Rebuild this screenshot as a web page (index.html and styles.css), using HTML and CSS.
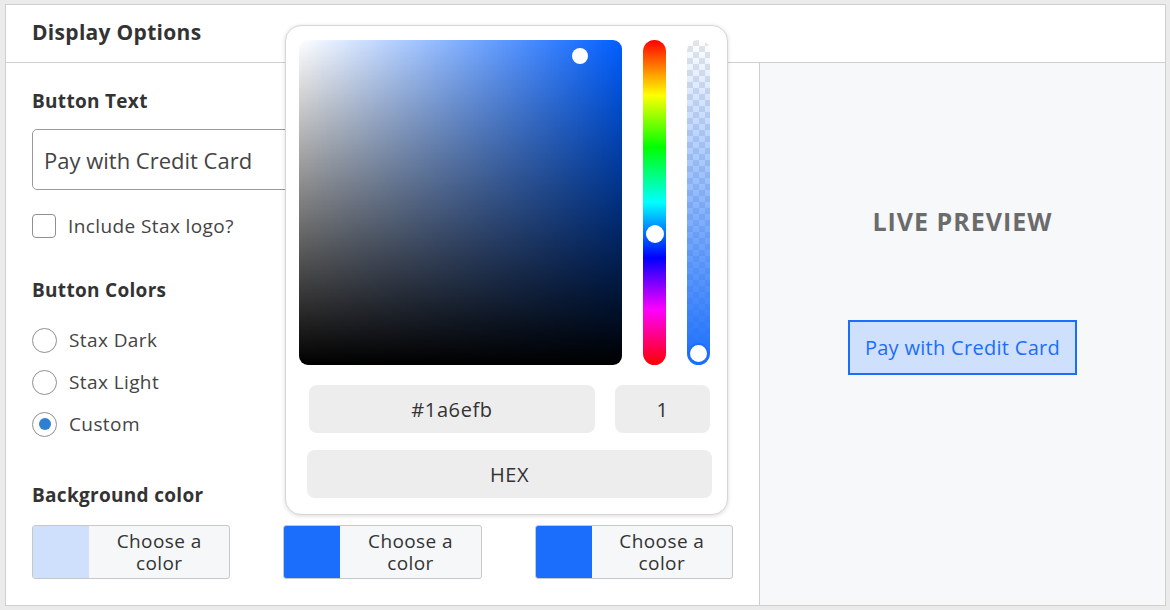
FILE: index.html
```html
<!DOCTYPE html>
<html lang="en">
<head>
	<meta charset="utf-8">
	<title>Display Options</title>
	<link rel="stylesheet" href="styles.css">
</head>
<body>
	<div class="card">
		<div class="card-head">Display Options</div>
		<div class="card-body">
			<div class="options">
				<div class="label">Button Text</div>
				<input type="text" class="text-input" value="Pay with Credit Card">
				<label class="check"><span class="box"></span>Include Stax logo?</label>

				<div class="label label-colors">Button Colors</div>
				<label class="radio"><span class="dot"></span>Stax Dark</label>
				<label class="radio"><span class="dot"></span>Stax Light</label>
				<label class="radio"><span class="dot on"></span>Custom</label>

				<div class="label label-bg">Background color</div>
				<div class="swatches">
					<div class="swatch"><span class="chip chip-light"></span><span class="chip-text">Choose a color</span></div>
					<div class="swatch"><span class="chip"></span><span class="chip-text">Choose a color</span></div>
					<div class="swatch"><span class="chip"></span><span class="chip-text">Choose a color</span></div>
				</div>
			</div>
			<div class="preview">
				<div class="preview-title">LIVE PREVIEW</div>
				<div class="pay-btn">Pay with Credit Card</div>
			</div>
		</div>

		<!-- color picker popover -->
		<div class="picker">
			<div class="picker-top">
				<div class="sat"><span class="sat-handle"></span></div>
				<div class="hue"><span class="hue-handle"></span></div>
				<div class="alpha"><span class="alpha-handle"></span></div>
			</div>
			<div class="picker-fields">
				<div class="field field-hex">#1a6efb</div>
				<div class="field field-alpha">1</div>
			</div>
			<div class="field field-mode">HEX</div>
		</div>
	</div>
</body>
</html>
```

FILE: styles.css
```css
body {
	margin: 0;
	padding: 4px 4px 4px 5px;
	background: #ebebeb;
	font-family: 'Open Sans', 'Noto Sans', sans-serif;
	color: #333;
}
.card {
	position: relative;
	height: 600px;
	background: #fff;
	border: 1px solid #cfcfcf;
	display: flex;
	flex-direction: column;
}
.card-head {
	height: 54px;
	padding: 0 26px 3px;
	display: flex;
	align-items: center;
	font-size: 21px;
	font-weight: 700;
	letter-spacing: 0.3px;
	border-bottom: 1px solid #cfcfcf;
}
.card-body {
	flex: 1;
	display: grid;
	grid-template-columns: 754px 1fr;
}

/* left side */
.options {
	padding: 25px 26px 0;
	border-right: 1px solid #cfcfcf;
}
.label {
	font-size: 19px;
	font-weight: 700;
	line-height: 26px;
	letter-spacing: 0.3px;
}
.text-input {
	display: block;
	box-sizing: border-box;
	width: 440px;
	height: 61px;
	margin-top: 15px;
	padding: 0 11px;
	border: 1px solid #9a9a9a;
	border-radius: 5px;
	font-family: inherit;
	font-size: 22px;
	color: #444;
}
.check, .radio {
	display: flex;
	align-items: center;
	gap: 12px;
	font-size: 19px;
	letter-spacing: 0.4px;
	color: #444;
	height: 26px;
}
.check {
	margin-top: 23px;
}
.box {
	width: 22px;
	height: 22px;
	border: 1px solid #8f8f8f;
	border-radius: 4px;
}
.label-colors {
	margin-top: 38px;
	margin-bottom: 24px;
}
.radio {
	margin-bottom: 16px;
}
.dot {
	box-sizing: border-box;
	width: 25px;
	height: 25px;
	border: 1px solid #8f8f8f;
	border-radius: 50%;
	display: flex;
	align-items: center;
	justify-content: center;
}
.dot.on::after {
	content: "";
	width: 12px;
	height: 12px;
	border-radius: 50%;
	background: #2f80d1;
}
.label-bg {
	margin-top: 45px;
}
.swatches {
	margin-top: 17px;
	display: flex;
	gap: 53px;
}
.swatch {
	width: 197px;
	height: 52px;
	display: flex;
	border: 1px solid #c8c8c8;
	border-radius: 3px;
	background: #f6f7f9;
	overflow: hidden;
}
.chip {
	width: 56px;
	background: #1a6efb;
}
.chip-light {
	background: #cfe0fd;
}
.chip-text {
	flex: 1;
	display: flex;
	align-items: center;
	justify-content: center;
	text-align: center;
	padding: 0 16px;
	font-size: 19px;
	letter-spacing: 0.4px;
	line-height: 22px;
	color: #333;
}

/* right side */
.preview {
	background: #f7f8fa;
	display: flex;
	flex-direction: column;
	align-items: center;
	padding-top: 141px;
}
.preview-title {
	font-size: 25px;
	font-weight: 700;
	color: #6b6b6b;
	letter-spacing: 1px;
}
.pay-btn {
	margin-top: 82px;
	padding: 0 15px;
	height: 51px;
	display: flex;
	align-items: center;
	background: #cfe0fd;
	border: 2px solid #1a6efb;
	color: #1a6efb;
	font-size: 20px;
	letter-spacing: 0.3px;
}

/* picker popover */
.picker {
	position: absolute;
	left: 279px;
	top: 20px;
	width: 443px;
	box-sizing: border-box;
	padding: 14px 17px 16px 13px;
	background: #fff;
	border: 1px solid #d6d6d6;
	border-radius: 16px;
	box-shadow: 0 1px 4px rgba(0, 0, 0, 0.15);
}
.picker-top {
	display: flex;
	height: 325px;
}
.sat {
	position: relative;
	width: 326px;
	border-radius: 9px;
	background:
		linear-gradient(to top, #000, rgba(0, 0, 0, 0)),
		linear-gradient(to right, #fff, rgba(255, 255, 255, 0)),
		hsl(218, 100%, 50%);
}
.sat-handle {
	position: absolute;
	left: 273px;
	top: 8px;
	width: 16px;
	height: 16px;
	border-radius: 50%;
	background: #fff;
}
.hue {
	position: relative;
	width: 23px;
	margin-left: 21px;
	border-radius: 12px;
	background: linear-gradient(to bottom, #f00, #ff0 17%, #0f0 33%, #0ff 50%, #00f 67%, #f0f 83%, #f00);
}
.hue-handle {
	position: absolute;
	left: 3px;
	top: 185px;
	width: 18px;
	height: 18px;
	border-radius: 50%;
	background: #fff;
}
.alpha {
	position: relative;
	width: 23px;
	margin-left: 21px;
	border-radius: 12px;
	background:
		linear-gradient(to bottom, rgba(26, 110, 251, 0), #1a6efb),
		repeating-conic-gradient(#e3e6ea 0 25%, #fff 0 50%) 0 0 / 12px 12px;
}
.alpha-handle {
	position: absolute;
	left: 1px;
	bottom: 1px;
	box-sizing: border-box;
	width: 21px;
	height: 21px;
	border-radius: 50%;
	background: #fff;
	border: 2px solid #1a6efb;
}
.picker-fields {
	display: flex;
	gap: 20px;
	margin: 20px 0 0 10px;
	width: 401px;
}
.field {
	height: 48px;
	display: flex;
	align-items: center;
	justify-content: center;
	background: #ededed;
	border-radius: 8px;
	font-size: 20px;
	letter-spacing: 0.6px;
	color: #333;
}
.field-hex {
	width: 286px;
}
.field-alpha {
	flex: 1;
}
.field-mode {
	margin: 17px 0 0 8px;
	width: 405px;
}
```
